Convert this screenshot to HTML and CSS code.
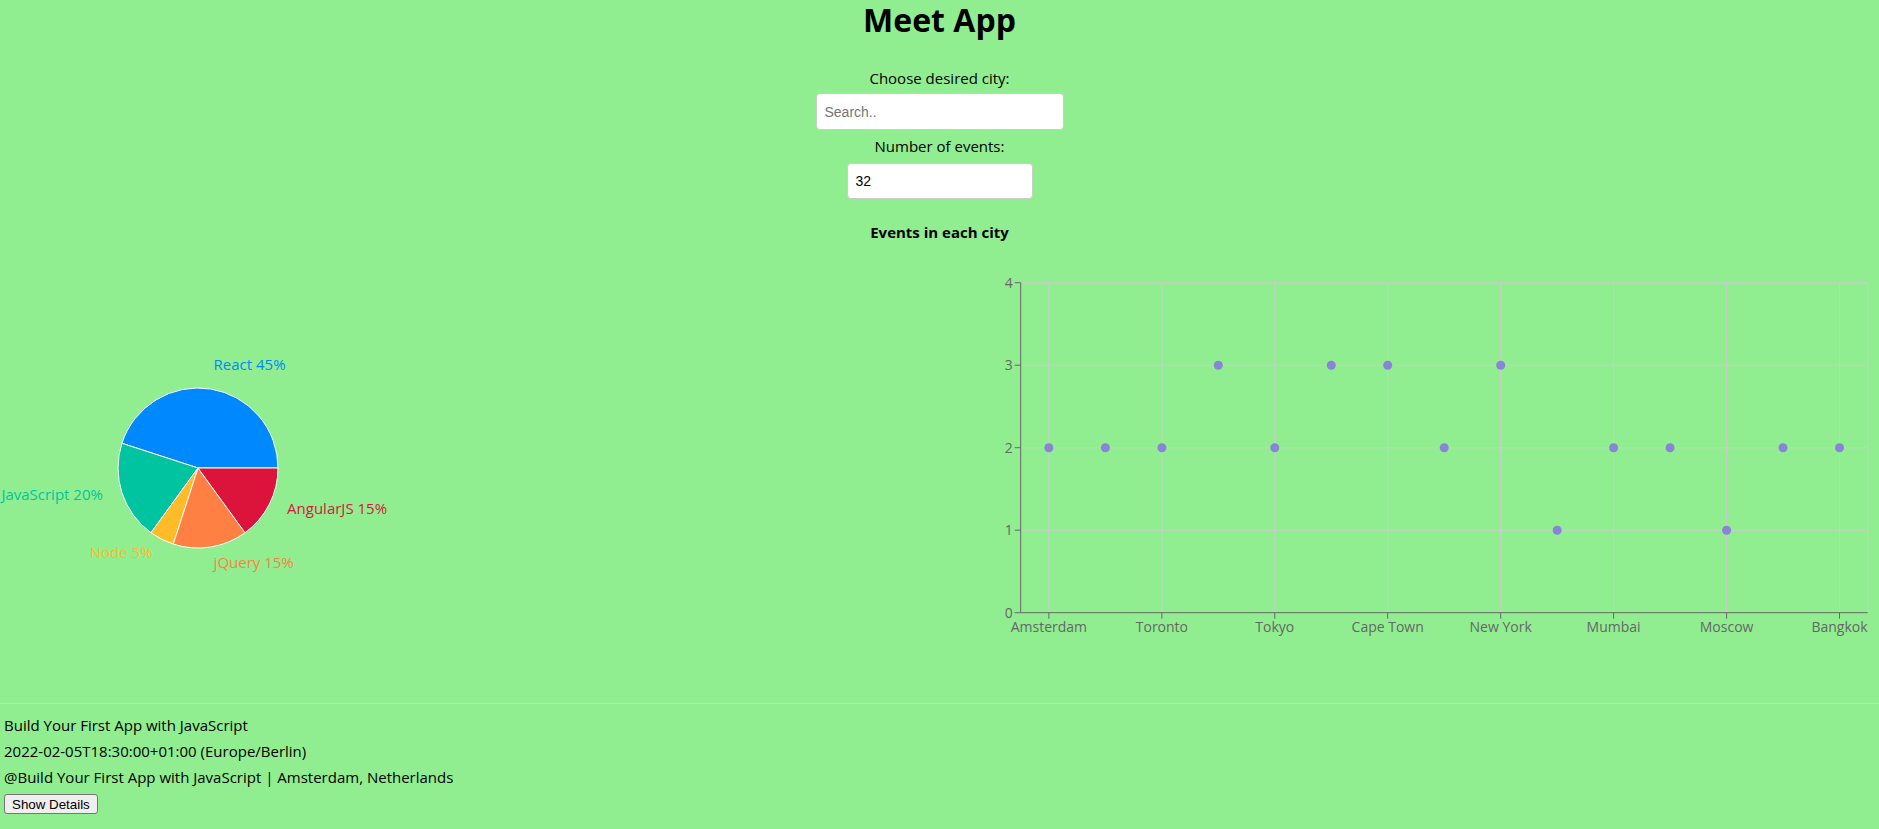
FILE: index.html
```html
<!DOCTYPE html>
<html lang="en">
<head>
<meta charset="utf-8">
<title>Meet App</title>
<link rel="stylesheet" href="styles.css">
</head>
<body>
<div class="app">
  <h1 class="title">Meet App</h1>
  <div class="city-search">
    <label class="field-label">Choose desired city:</label>
    <input class="city-input" type="text" placeholder="Search..">
  </div>
  <div class="number-of-events">
    <label class="field-label">Number of events:</label>
    <input class="number-input" type="text" value="32">
  </div>
  <h4 class="chart-title">Events in each city</h4>
  <div class="charts">
    <svg class="pie-chart" width="940" height="400" viewBox="0 0 940 400">
      <g stroke="#fff" stroke-width="1">
        <path fill="#0088FE" d="M198,206 L278,206 A80,80 0 0,0 121.91,181.28 Z"/>
        <path fill="#00C49F" d="M198,206 L121.91,181.28 A80,80 0 0,0 150.98,270.72 Z"/>
        <path fill="#FFBB28" d="M198,206 L150.98,270.72 A80,80 0 0,0 173.28,282.09 Z"/>
        <path fill="#FF8042" d="M198,206 L173.28,282.09 A80,80 0 0,0 245.02,270.72 Z"/>
        <path fill="#DC143C" d="M198,206 L245.02,270.72 A80,80 0 0,0 278,206 Z"/>
      </g>
      <g class="pie-labels" dominant-baseline="central">
        <text x="213.6" y="102.2" fill="#0088FE" text-anchor="start">React 45%</text>
        <text x="102.9" y="231.9" fill="#00C49F" text-anchor="end">JavaScript 20%</text>
        <text x="152.6" y="290.1" fill="#FFBB28" text-anchor="end">Node 5%</text>
        <text x="213.6" y="299.8" fill="#FF8042" text-anchor="start">jQuery 15%</text>
        <text x="287.1" y="246.4" fill="#DC143C" text-anchor="start">AngularJS 15%</text>
      </g>
    </svg>
    <svg class="scatter-chart" width="939" height="400" viewBox="0 0 939 400">
      <g class="grid" stroke="#ccc" stroke-width="1" fill="none">
        <line x1="80.7" y1="20.7" x2="927.7" y2="20.7"/>
        <line x1="80.7" y1="103.2" x2="927.7" y2="103.2"/>
        <line x1="80.7" y1="185.7" x2="927.7" y2="185.7"/>
        <line x1="80.7" y1="268.2" x2="927.7" y2="268.2"/>
        <line x1="108.9" y1="20.7" x2="108.9" y2="350.7"/>
        <line x1="221.9" y1="20.7" x2="221.9" y2="350.7"/>
        <line x1="334.8" y1="20.7" x2="334.8" y2="350.7"/>
        <line x1="447.7" y1="20.7" x2="447.7" y2="350.7"/>
        <line x1="560.7" y1="20.7" x2="560.7" y2="350.7"/>
        <line x1="673.6" y1="20.7" x2="673.6" y2="350.7"/>
        <line x1="786.6" y1="20.7" x2="786.6" y2="350.7"/>
        <line x1="899.5" y1="20.7" x2="899.5" y2="350.7"/>
        <line x1="927.7" y1="20.7" x2="927.7" y2="350.7"/>
      </g>
      <g class="axes" stroke="#666" stroke-width="1" fill="none">
        <line x1="80.7" y1="20.7" x2="80.7" y2="350.7"/>
        <line x1="80.7" y1="350.7" x2="927.7" y2="350.7"/>
        <line x1="74.7" y1="20.7" x2="80.7" y2="20.7"/>
        <line x1="74.7" y1="103.2" x2="80.7" y2="103.2"/>
        <line x1="74.7" y1="185.7" x2="80.7" y2="185.7"/>
        <line x1="74.7" y1="268.2" x2="80.7" y2="268.2"/>
        <line x1="74.7" y1="350.7" x2="80.7" y2="350.7"/>
        <line x1="108.9" y1="350.7" x2="108.9" y2="356.7"/>
        <line x1="221.9" y1="350.7" x2="221.9" y2="356.7"/>
        <line x1="334.8" y1="350.7" x2="334.8" y2="356.7"/>
        <line x1="447.7" y1="350.7" x2="447.7" y2="356.7"/>
        <line x1="560.7" y1="350.7" x2="560.7" y2="356.7"/>
        <line x1="673.6" y1="350.7" x2="673.6" y2="356.7"/>
        <line x1="786.6" y1="350.7" x2="786.6" y2="356.7"/>
        <line x1="899.5" y1="350.7" x2="899.5" y2="356.7"/>
      </g>
      <g class="tick-labels" fill="#666">
        <text x="72.7" y="25.7" text-anchor="end">4</text>
        <text x="72.7" y="108.2" text-anchor="end">3</text>
        <text x="72.7" y="190.7" text-anchor="end">2</text>
        <text x="72.7" y="273.2" text-anchor="end">1</text>
        <text x="72.7" y="355.7" text-anchor="end">0</text>
        <text x="108.9" y="369.7" text-anchor="middle">Amsterdam</text>
        <text x="221.9" y="369.7" text-anchor="middle">Toronto</text>
        <text x="334.8" y="369.7" text-anchor="middle">Tokyo</text>
        <text x="447.7" y="369.7" text-anchor="middle">Cape Town</text>
        <text x="560.7" y="369.7" text-anchor="middle">New York</text>
        <text x="673.6" y="369.7" text-anchor="middle">Mumbai</text>
        <text x="786.6" y="369.7" text-anchor="middle">Moscow</text>
        <text x="899.5" y="369.7" text-anchor="middle">Bangkok</text>
      </g>
      <g class="dots" fill="#8884d8">
        <circle cx="108.9" cy="185.7" r="4.5"/>
        <circle cx="165.4" cy="185.7" r="4.5"/>
        <circle cx="221.9" cy="185.7" r="4.5"/>
        <circle cx="278.3" cy="103.2" r="4.5"/>
        <circle cx="334.8" cy="185.7" r="4.5"/>
        <circle cx="391.3" cy="103.2" r="4.5"/>
        <circle cx="447.7" cy="103.2" r="4.5"/>
        <circle cx="504.2" cy="185.7" r="4.5"/>
        <circle cx="560.7" cy="103.2" r="4.5"/>
        <circle cx="617.2" cy="268.2" r="4.5"/>
        <circle cx="673.6" cy="185.7" r="4.5"/>
        <circle cx="730.1" cy="185.7" r="4.5"/>
        <circle cx="786.6" cy="268.2" r="4.5"/>
        <circle cx="843.0" cy="185.7" r="4.5"/>
        <circle cx="899.5" cy="185.7" r="4.5"/>
      </g>
    </svg>
  </div>
  <ul class="event-list">
    <li class="event">
      <div class="event-line">Build Your First App with JavaScript</div>
      <div class="event-line">2022-02-05T18:30:00+01:00 (Europe/Berlin)</div>
      <div class="event-line">@Build Your First App with JavaScript | Amsterdam, Netherlands</div>
      <button class="details-btn" type="button">Show Details</button>
    </li>
  </ul>
</div>
</body>
</html>
```
FILE: styles.css
```css
html, body {
  margin: 0;
  padding: 0;
}

body {
  background: #90ee90;
  font-family: "Open Sans", "Noto Sans", sans-serif;
  font-size: 15px;
  color: #000;
}

.app {
  text-align: center;
}

.title {
  margin: 0;
  font-size: 32px;
  line-height: 40px;
  font-weight: 700;
}

.field-label {
  display: block;
  line-height: 20px;
}

.city-search {
  margin-top: 28px;
}

.city-input,
.number-input {
  display: block;
  margin: 5px auto 0;
  box-sizing: border-box;
  background: #fff;
  border: 1px solid #ccc;
  border-radius: 4px;
  padding: 0 8px;
  font-family: "Liberation Sans", Arial, sans-serif;
  font-size: 14px;
  color: #000;
  outline: none;
}

.city-input {
  width: 248px;
  height: 37px;
}

.city-input::placeholder {
  color: #757575;
}

.number-of-events {
  margin-top: 6px;
}

.number-input {
  width: 186px;
  height: 36px;
  margin-top: 7px;
}

.chart-title {
  margin: 23px 0 0;
  font-size: 15px;
  line-height: 20px;
  font-weight: 700;
}

.charts {
  margin-top: 20px;
  display: grid;
  grid-template-columns: 940px 939px;
  height: 400px;
}

.charts svg {
  display: block;
  overflow: visible;
}

.pie-labels {
  font-family: "Open Sans", "Noto Sans", sans-serif;
  font-size: 15px;
}

.tick-labels {
  font-family: "Open Sans", "Noto Sans", sans-serif;
  font-size: 14px;
}

.event-list {
  list-style: none;
  margin: 41px 0 0;
  padding: 0;
  text-align: left;
}

.event {
  border-top: 1px solid #cfd8cf;
  padding: 8px 4px 12px;
}

.event-line {
  line-height: 26px;
}

.details-btn {
  margin-top: 4px;
  height: 20px;
  padding: 0 7px;
  font-family: "Liberation Sans", Arial, sans-serif;
  font-size: 13.333px;
  color: #000;
  background: #efefef;
  border: 1px solid #767676;
  border-radius: 3px;
}
```
